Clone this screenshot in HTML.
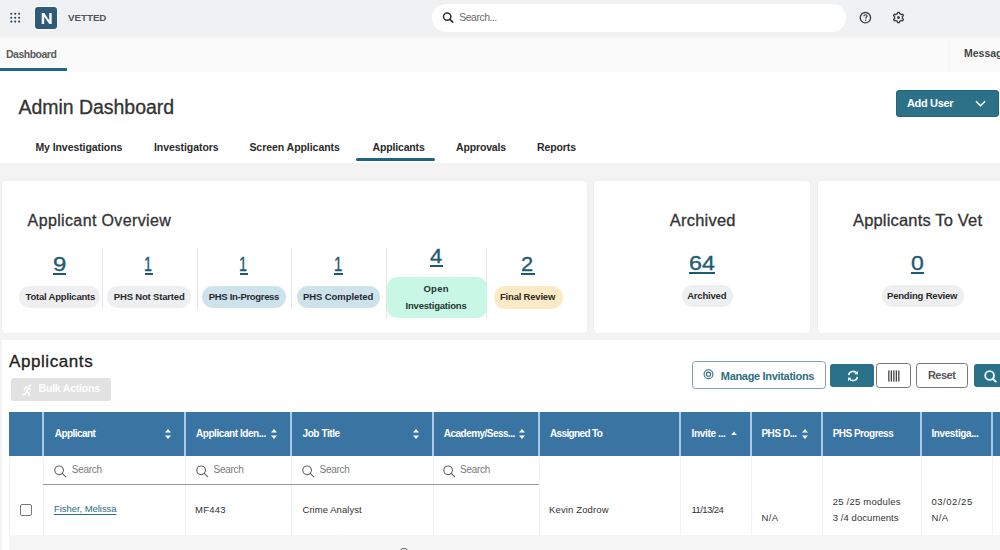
<!DOCTYPE html>
<html><head><meta charset="utf-8">
<style>
*{box-sizing:border-box;margin:0;padding:0}
html,body{width:1000px;height:550px;overflow:hidden;background:#fff;font-family:"Liberation Sans",sans-serif;color:#333}
.a{position:absolute}
.t{position:absolute;white-space:nowrap;line-height:normal}
.card{position:absolute;background:#fff;border-radius:4px;box-shadow:0 0 1.5px rgba(0,0,0,0.07)}
.pill{position:absolute;height:22px;border-radius:11px;background:#eeeff1}
.dv{position:absolute;width:1px;background:#e6e6e6}
.sep{position:absolute;top:411.5px;width:2px;height:44.7px;background:#a9c9e4}
.vl{position:absolute;top:456px;width:1px;height:79px;background:#f3f3f3}
.ul{position:absolute;height:2.1px;background:#1d5a73}
</style></head><body>
<div class="a" style="left:0;top:36px;width:1000px;height:36px;background:#fafafa"></div>
<div class="a" style="left:0;top:0;width:1000px;height:36px;background:#f0f1f3;box-shadow:0 1px 3px rgba(0,0,0,0.05)"></div>

<svg class="a" style="left:9px;top:12px" width="12" height="12" viewBox="0 0 12 12">
<g fill="#24444f"><circle cx="2.3" cy="1.8" r="1.05"/><circle cx="6.2" cy="1.8" r="1.05"/><circle cx="10.1" cy="1.8" r="1.05"/>
<circle cx="2.3" cy="5.7" r="1.05"/><circle cx="6.2" cy="5.7" r="1.05"/><circle cx="10.1" cy="5.7" r="1.05"/>
<circle cx="2.3" cy="9.6" r="1.05"/><circle cx="6.2" cy="9.6" r="1.05"/><circle cx="10.1" cy="9.6" r="1.05"/></g></svg>
<div class="a" style="left:34.5px;top:6.7px;width:22.5px;height:22.3px;background:#2f5b78;border-radius:3px;box-shadow:0 0 0 1px #fafbfc"></div>
<svg class="a" style="left:34.5px;top:6.7px" width="23" height="23" viewBox="0 0 23 23"><path d="M6.7 17.1V6h2.5l5 7.2V6h2.5v11.1h-2.4l-5.1-7.3v7.3z" fill="#f4f8fa"/></svg>

<div class="a" style="left:432px;top:4px;width:414px;height:28px;border-radius:14px;background:#fff"></div>
<svg class="a" style="left:441px;top:10px" width="15" height="15" viewBox="0 0 15 15"><circle cx="6.2" cy="6.6" r="3.7" fill="none" stroke="#333" stroke-width="1.5"/><path d="M8.9 9.3L11.7 12.1" stroke="#333" stroke-width="1.7" stroke-linecap="round"/></svg>

<svg class="a" style="left:858px;top:11px" width="15" height="14" viewBox="0 0 15 14"><circle cx="7.4" cy="6.7" r="5.2" fill="none" stroke="#3f3f3f" stroke-width="1.35"/><path d="M5.8 5.3c0-1 .7-1.6 1.7-1.6s1.6.6 1.6 1.4c0 1.1-1.5 1.2-1.5 2.3" fill="none" stroke="#3f3f3f" stroke-width="1.15"/><circle cx="7.6" cy="9.3" r="0.75" fill="#3f3f3f"/></svg>
<svg class="a" style="left:891px;top:10.15px" width="15" height="15" viewBox="0 0 15 15"><path fill="none" stroke="#3f3f3f" stroke-width="1.3" stroke-linejoin="round" d="M5.53 4.08 L6.41 3.70 L6.58 2.28 L8.42 2.28 L8.59 3.70 L9.48 4.08 L10.24 4.66 L11.56 4.09 L12.48 5.69 L11.33 6.54 L11.45 7.50 L11.33 8.46 L12.48 9.31 L11.56 10.91 L10.24 10.34 L9.48 10.92 L8.59 11.30 L8.42 12.72 L6.58 12.72 L6.41 11.30 L5.53 10.92 L4.76 10.34 L3.44 10.91 L2.52 9.31 L3.67 8.46 L3.55 7.50 L3.67 6.54 L2.52 5.69 L3.44 4.09 L4.76 4.66Z"/><circle cx="7.5" cy="7.5" r="1.5" fill="#3f3f3f"/></svg>

<div class="a" style="left:0;top:68px;width:67px;height:3px;background:#1f6480"></div>
<div class="a" style="left:948px;top:36px;width:2px;height:36px;background:#f5f5f5"></div>

<div class="a" style="left:896px;top:90px;width:103px;height:27px;border-radius:3px;background:#2d7189;border:1px solid #266379"></div>
<svg class="a" style="left:974px;top:98px" width="13" height="11" viewBox="0 0 13 11"><path d="M2 3.2L6.5 7.7L11 3.2" fill="none" stroke="#fff" stroke-width="1.6"/></svg>

<div class="a" style="left:356px;top:158px;width:79px;height:3px;background:#1f6480;border-radius:1.5px"></div>

<div class="a" style="left:0;top:163px;width:1000px;height:387px;background:#f3f3f3"></div>
<div class="card" style="left:2px;top:181px;width:585px;height:152px"></div>
<div class="card" style="left:594px;top:181px;width:216px;height:152px"></div>
<div class="card" style="left:818px;top:181px;width:215px;height:152px"></div>

<div class="dv" style="left:102px;top:248px;height:60px"></div>
<div class="dv" style="left:196.5px;top:248px;height:60px"></div>
<div class="dv" style="left:291px;top:248px;height:60px"></div>
<div class="dv" style="left:386px;top:248px;height:70px"></div>
<div class="dv" style="left:486px;top:248px;height:70px"></div>

<div class="pill" style="left:19px;top:286px;width:81px"></div>
<div class="pill" style="left:107px;top:286px;width:84px"></div>
<div class="pill" style="left:202px;top:286px;width:84px;background:#cde2eb"></div>
<div class="pill" style="left:297px;top:286px;width:83px;background:#cde2eb"></div>
<div class="pill" style="left:386.5px;top:277px;width:100.5px;height:40.5px;border-radius:10px;background:#c9f7e6"></div>
<div class="pill" style="left:493.5px;top:285.6px;width:69px;height:23px;background:#fbeac5"></div>
<div class="pill" style="left:682px;top:285px;width:51px"></div>
<div class="pill" style="left:881.5px;top:284.7px;width:82px"></div>

<div class="ul" style="left:53px;top:272.5px;width:13px"></div>
<div class="ul" style="left:144.5px;top:272.6px;width:8.5px"></div>
<div class="ul" style="left:239.5px;top:272.6px;width:8.5px"></div>
<div class="ul" style="left:334.3px;top:272.6px;width:8.5px"></div>
<div class="ul" style="left:429.5px;top:264.5px;width:13.2px"></div>
<div class="ul" style="left:521.3px;top:272.9px;width:13.4px"></div>
<div class="ul" style="left:689.2px;top:272px;width:26.1px"></div>
<div class="ul" style="left:910.6px;top:272px;width:13.4px"></div>

<div class="a" style="left:2px;top:340px;width:998px;height:210px;background:#fff"></div>
<div class="a" style="left:10.8px;top:378.2px;width:100px;height:22.6px;border-radius:3px;background:#e2e2e2"></div>
<svg class="a" style="left:21px;top:384px" width="12" height="12" viewBox="0 0 12 12"><g fill="none" stroke="#fff" stroke-width="1.5" stroke-linecap="round" stroke-linejoin="round"><path d="M5 3.2L7.8 3.6L9.2 5.6"/><path d="M7.6 3.6L5.6 7.6L8 9.2L8.3 11.3"/><path d="M5.6 7.6L3.6 10.6L1.4 10.6"/><path d="M5 3.2L3.2 5.6"/></g><circle cx="8.8" cy="1.6" r="1.2" fill="#fff"/></svg>

<div class="a" style="left:691.5px;top:361.4px;width:134.5px;height:28px;border:1.3px solid #7aa3ad;border-radius:3.5px;background:#fff"></div>
<svg class="a" style="left:703px;top:369px" width="11" height="11" viewBox="0 0 11 11"><circle cx="5.5" cy="5.2" r="4.4" fill="none" stroke="#2e6e80" stroke-width="1.1"/><circle cx="5.5" cy="5.2" r="2.1" fill="none" stroke="#2e6e80" stroke-width="1.1"/></svg>
<div class="a" style="left:830.3px;top:363.6px;width:43.7px;height:23.4px;border-radius:3px;background:#2b7189"></div>
<svg class="a" style="left:845.5px;top:368.5px" width="14" height="14" viewBox="0 0 14 14"><g fill="none" stroke="#e6f4f8" stroke-width="1.7"><path d="M2.6 6.2A4.5 4.5 0 0 1 10.8 4.4"/><path d="M11.4 7.8A4.5 4.5 0 0 1 3.2 9.6"/></g><path d="M12 1.8L12 5.6L8.4 5.2Z" fill="#e6f4f8"/><path d="M2 12.2L2 8.4L5.6 8.8Z" fill="#e6f4f8"/></svg>
<div class="a" style="left:876.2px;top:363.2px;width:34.4px;height:24.4px;border:1.3px solid #777;border-radius:3.5px;background:#fff"></div>
<svg class="a" style="left:887px;top:370px" width="13" height="12" viewBox="0 0 13 12"><g fill="#444"><rect x="1.2" y="0.4" width="1.3" height="11.2"/><rect x="3.7" y="0.4" width="1.3" height="11.2"/><rect x="6.2" y="0.4" width="1.3" height="11.2"/><rect x="8.7" y="0.4" width="1.3" height="11.2"/><rect x="11.2" y="0.4" width="1.3" height="11.2"/></g></svg>
<div class="a" style="left:916.3px;top:363.2px;width:51.3px;height:24.5px;border:1.3px solid #777;border-radius:3.5px;background:#fff"></div>
<div class="a" style="left:973.7px;top:363.9px;width:40px;height:23.6px;border-radius:3px;background:#2b7189"></div>
<svg class="a" style="left:983px;top:369px" width="15" height="15" viewBox="0 0 15 15"><circle cx="6.6" cy="6.5" r="4.4" fill="none" stroke="#e6f6fa" stroke-width="1.9"/><path d="M9.8 9.7L12.8 12.6" stroke="#e6f6fa" stroke-width="2" stroke-linecap="round"/></svg>

<div class="a" style="left:9px;top:411.5px;width:991px;height:44.7px;background:#3a74a3"></div>
<div class="sep" style="left:42px"></div>
<div class="sep" style="left:183.6px"></div>
<div class="sep" style="left:290px"></div>
<div class="sep" style="left:431.6px"></div>
<div class="sep" style="left:538px"></div>
<div class="sep" style="left:679px"></div>
<div class="sep" style="left:750px"></div>
<div class="sep" style="left:820.5px"></div>
<div class="sep" style="left:920px"></div>
<div class="sep" style="left:991px"></div>

<svg class="a" style="left:164px;top:428px" width="8" height="12" viewBox="0 0 8 12"><path d="M4 1L7 4.6H1z M4 11L7 7.4H1z" fill="#fff"/></svg>
<svg class="a" style="left:270px;top:428px" width="8" height="12" viewBox="0 0 8 12"><path d="M4 1L7 4.6H1z M4 11L7 7.4H1z" fill="#fff"/></svg>
<svg class="a" style="left:412px;top:428px" width="8" height="12" viewBox="0 0 8 12"><path d="M4 1L7 4.6H1z M4 11L7 7.4H1z" fill="#fff"/></svg>
<svg class="a" style="left:518px;top:428px" width="8" height="12" viewBox="0 0 8 12"><path d="M4 1L7 4.6H1z M4 11L7 7.4H1z" fill="#fff"/></svg>
<svg class="a" style="left:730px;top:428px" width="8" height="12" viewBox="0 0 8 12"><path d="M4 3.6L6.8 7H1.2z" fill="#fff"/></svg>
<svg class="a" style="left:801px;top:428px" width="8" height="12" viewBox="0 0 8 12"><path d="M4 1L7 4.6H1z M4 11L7 7.4H1z" fill="#fff"/></svg>

<div class="vl" style="left:43px"></div>
<div class="vl" style="left:184.5px"></div>
<div class="vl" style="left:291px"></div>
<div class="vl" style="left:432.5px"></div>
<div class="vl" style="left:539px"></div>
<div class="vl" style="left:680px"></div>
<div class="vl" style="left:751px"></div>
<div class="vl" style="left:821.5px"></div>
<div class="vl" style="left:921px"></div>
<div class="vl" style="left:992px"></div>
<div class="a" style="left:8.5px;top:456px;width:1px;height:94px;background:#f0f0f0"></div>

<div class="a" style="left:43px;top:483.5px;width:496px;height:1.5px;background:#9a9a9a"></div>
<svg class="a" style="left:54px;top:464.5px" width="13" height="13" viewBox="0 0 13 13"><circle cx="5.1" cy="5.3" r="4.3" fill="none" stroke="#666" stroke-width="1.15"/><path d="M8.2 8.4L11.6 11.6" stroke="#666" stroke-width="1.3" stroke-linecap="round"/></svg>
<svg class="a" style="left:195.5px;top:464.5px" width="13" height="13" viewBox="0 0 13 13"><circle cx="5.1" cy="5.3" r="4.3" fill="none" stroke="#666" stroke-width="1.15"/><path d="M8.2 8.4L11.6 11.6" stroke="#666" stroke-width="1.3" stroke-linecap="round"/></svg>
<svg class="a" style="left:301.5px;top:464.5px" width="13" height="13" viewBox="0 0 13 13"><circle cx="5.1" cy="5.3" r="4.3" fill="none" stroke="#666" stroke-width="1.15"/><path d="M8.2 8.4L11.6 11.6" stroke="#666" stroke-width="1.3" stroke-linecap="round"/></svg>
<svg class="a" style="left:443px;top:464.5px" width="13" height="13" viewBox="0 0 13 13"><circle cx="5.1" cy="5.3" r="4.3" fill="none" stroke="#666" stroke-width="1.15"/><path d="M8.2 8.4L11.6 11.6" stroke="#666" stroke-width="1.3" stroke-linecap="round"/></svg>

<div class="a" style="left:9px;top:535.4px;width:991px;height:15px;background:#f6f6f6"></div>
<div class="a" style="left:399px;top:548.2px;width:9.5px;height:9.5px;border-radius:50%;border:1.8px solid #555"></div>

<div class="a" style="left:20px;top:504.2px;width:11.5px;height:12px;border:1.3px solid #777;border-radius:2px;background:#fff"></div>
<div class="t" id="t0" style="left:68.00px;top:12.00px;font-size:9.8px;font-weight:700;color:#555;letter-spacing:-0.040px;">VETTED</div>
<div class="t" id="t1" style="left:459.21px;top:11.01px;font-size:10.5px;font-weight:400;color:#6a6a6a;letter-spacing:-0.500px;">Search...</div>
<div class="t" id="t2" style="left:6.00px;top:47.51px;font-size:10.5px;font-weight:700;color:#5c5c5c;letter-spacing:-0.500px;">Dashboard</div>
<div class="t" id="t3" style="left:964.00px;top:46.60px;font-size:10.5px;font-weight:700;color:#444;letter-spacing:0.000px;">Messages</div>
<div class="t" id="t4" style="left:18.41px;top:95.60px;font-size:19.5px;font-weight:400;color:#333;letter-spacing:-0.029px;-webkit-text-stroke:0.3px currentColor;">Admin Dashboard</div>
<div class="t" id="t5" style="left:907.00px;top:97.00px;font-size:11px;font-weight:700;color:#fff;letter-spacing:-0.343px;">Add User</div>
<div class="t" id="t6" style="left:35.41px;top:141.01px;font-size:10.5px;font-weight:700;color:#2a2a2a;letter-spacing:-0.075px;">My Investigations</div>
<div class="t" id="t7" style="left:154.00px;top:141.01px;font-size:10.5px;font-weight:700;color:#2a2a2a;letter-spacing:-0.058px;">Investigators</div>
<div class="t" id="t8" style="left:249.41px;top:141.01px;font-size:10.5px;font-weight:700;color:#2a2a2a;letter-spacing:-0.050px;">Screen Applicants</div>
<div class="t" id="t9" style="left:372.50px;top:141.01px;font-size:10.5px;font-weight:700;color:#2a2a2a;letter-spacing:-0.156px;">Applicants</div>
<div class="t" id="t10" style="left:456.00px;top:141.01px;font-size:10.5px;font-weight:700;color:#2a2a2a;letter-spacing:-0.150px;">Approvals</div>
<div class="t" id="t11" style="left:537.00px;top:141.01px;font-size:10.5px;font-weight:700;color:#2a2a2a;letter-spacing:-0.100px;">Reports</div>
<div class="t" id="t12" style="left:27.60px;top:211.60px;font-size:16px;font-weight:400;color:#333;letter-spacing:0.365px;-webkit-text-stroke:0.3px currentColor;">Applicant Overview</div>
<div class="t" id="t13" style="left:669.71px;top:210.70px;font-size:16.5px;font-weight:400;color:#333;letter-spacing:0.229px;-webkit-text-stroke:0.3px currentColor;">Archived</div>
<div class="t" id="t14" style="left:853.00px;top:210.70px;font-size:16.5px;font-weight:400;color:#333;letter-spacing:0.169px;-webkit-text-stroke:0.3px currentColor;">Applicants To Vet</div>
<div class="t" id="t15" style="left:53.00px;top:251.82px;font-size:21px;font-weight:400;color:#1d5a73;transform:scaleX(1.1410);transform-origin:0 0;-webkit-text-stroke:0.35px #1d5a73;">9</div>
<div class="t" id="t16" style="left:144.31px;top:252.10px;font-size:21px;font-weight:400;color:#1d5a73;transform:scaleX(0.6820);transform-origin:0 0;-webkit-text-stroke:0.35px #1d5a73;">1</div>
<div class="t" id="t17" style="left:239.31px;top:252.10px;font-size:21px;font-weight:400;color:#1d5a73;transform:scaleX(0.6820);transform-origin:0 0;-webkit-text-stroke:0.35px #1d5a73;">1</div>
<div class="t" id="t18" style="left:334.10px;top:252.10px;font-size:21px;font-weight:400;color:#1d5a73;transform:scaleX(0.7161);transform-origin:0 0;-webkit-text-stroke:0.35px #1d5a73;">1</div>
<div class="t" id="t19" style="left:430.10px;top:243.51px;font-size:21px;font-weight:400;color:#1d5a73;transform:scaleX(1.0474);transform-origin:0 0;-webkit-text-stroke:0.35px #1d5a73;">4</div>
<div class="t" id="t20" style="left:521.41px;top:252.10px;font-size:21px;font-weight:400;color:#1d5a73;transform:scaleX(1.0411);transform-origin:0 0;-webkit-text-stroke:0.35px #1d5a73;">2</div>
<div class="t" id="t21" style="left:689.21px;top:250.82px;font-size:21px;font-weight:400;color:#1d5a73;transform:scaleX(1.1093);transform-origin:0 0;-webkit-text-stroke:0.35px #1d5a73;">64</div>
<div class="t" id="t22" style="left:910.71px;top:250.82px;font-size:21px;font-weight:400;color:#1d5a73;transform:scaleX(1.0931);transform-origin:0 0;-webkit-text-stroke:0.35px #1d5a73;">0</div>
<div class="t" id="t23" style="left:25.50px;top:290.51px;font-size:9.5px;font-weight:700;color:#2a2a2a;letter-spacing:-0.200px;">Total Applicants</div>
<div class="t" id="t24" style="left:113.81px;top:290.51px;font-size:9.5px;font-weight:700;color:#2a2a2a;letter-spacing:-0.171px;">PHS Not Started</div>
<div class="t" id="t25" style="left:208.81px;top:290.51px;font-size:9.5px;font-weight:700;color:#1f2a30;letter-spacing:-0.314px;">PHS In-Progress</div>
<div class="t" id="t26" style="left:303.00px;top:290.51px;font-size:9.5px;font-weight:700;color:#1f2a30;letter-spacing:-0.083px;">PHS Completed</div>
<div class="t" id="t27" style="left:423.41px;top:283.01px;font-size:9.5px;font-weight:700;color:#1f3330;letter-spacing:0.267px;">Open</div>
<div class="t" id="t28" style="left:405.60px;top:300.01px;font-size:9.5px;font-weight:700;color:#1f3330;letter-spacing:-0.215px;">Investigations</div>
<div class="t" id="t29" style="left:500.00px;top:291.41px;font-size:9.5px;font-weight:700;color:#2d2a20;letter-spacing:-0.200px;">Final Review</div>
<div class="t" id="t30" style="left:687.21px;top:289.80px;font-size:9.5px;font-weight:700;color:#2a2a2a;letter-spacing:-0.200px;">Archived</div>
<div class="t" id="t31" style="left:887.00px;top:289.80px;font-size:9.5px;font-weight:700;color:#2a2a2a;letter-spacing:-0.185px;">Pending Review</div>
<div class="t" id="t32" style="left:9.00px;top:351.81px;font-size:17px;font-weight:400;color:#222;letter-spacing:0.578px;-webkit-text-stroke:0.3px currentColor;">Applicants</div>
<div class="t" id="t33" style="left:38.60px;top:382.41px;font-size:10.5px;font-weight:700;color:#fff;letter-spacing:-0.218px;">Bulk Actions</div>
<div class="t" id="t34" style="left:720.81px;top:369.81px;font-size:11px;font-weight:700;color:#2e6e80;letter-spacing:-0.318px;">Manage Invitations</div>
<div class="t" id="t35" style="left:927.91px;top:368.81px;font-size:11px;font-weight:700;color:#555;letter-spacing:-0.500px;">Reset</div>
<div class="t" id="t36" style="left:54.81px;top:427.81px;font-size:10px;font-weight:700;color:#fff;letter-spacing:-0.575px;">Applicant</div>
<div class="t" id="t37" style="left:196.00px;top:427.81px;font-size:10px;font-weight:700;color:#fff;letter-spacing:-0.438px;">Applicant Iden...</div>
<div class="t" id="t38" style="left:302.50px;top:427.81px;font-size:10px;font-weight:700;color:#fff;letter-spacing:-0.413px;">Job Title</div>
<div class="t" id="t39" style="left:443.81px;top:427.81px;font-size:10px;font-weight:700;color:#fff;letter-spacing:-0.529px;">Academy/Sess...</div>
<div class="t" id="t40" style="left:550.00px;top:427.81px;font-size:10px;font-weight:700;color:#fff;letter-spacing:-0.630px;">Assigned To</div>
<div class="t" id="t41" style="left:691.50px;top:427.81px;font-size:10px;font-weight:700;color:#fff;letter-spacing:-0.333px;">Invite ...</div>
<div class="t" id="t42" style="left:761.41px;top:427.81px;font-size:10px;font-weight:700;color:#fff;letter-spacing:-0.457px;">PHS D...</div>
<div class="t" id="t43" style="left:832.71px;top:427.81px;font-size:10px;font-weight:700;color:#fff;letter-spacing:-0.518px;">PHS Progress</div>
<div class="t" id="t44" style="left:931.41px;top:427.81px;font-size:10px;font-weight:700;color:#fff;letter-spacing:-0.400px;">Investiga...</div>
<div class="t" id="t45" style="left:71.81px;top:464.00px;font-size:10px;font-weight:400;color:#7a7a7a;letter-spacing:-0.280px;">Search</div>
<div class="t" id="t46" style="left:213.50px;top:464.00px;font-size:10px;font-weight:400;color:#7a7a7a;letter-spacing:-0.280px;">Search</div>
<div class="t" id="t47" style="left:319.50px;top:464.00px;font-size:10px;font-weight:400;color:#7a7a7a;letter-spacing:-0.280px;">Search</div>
<div class="t" id="t48" style="left:460.00px;top:464.00px;font-size:10px;font-weight:400;color:#7a7a7a;letter-spacing:-0.280px;">Search</div>
<div class="t" id="t49" style="left:54.00px;top:503.41px;font-size:9.5px;font-weight:400;color:#2b6b82;letter-spacing:-0.057px;text-decoration:underline;text-underline-offset:1.5px;">Fisher, Melissa</div>
<div class="t" id="t50" style="left:195.00px;top:504.22px;font-size:9.5px;font-weight:400;color:#333;letter-spacing:0.250px;">MF443</div>
<div class="t" id="t51" style="left:302.50px;top:504.22px;font-size:9.5px;font-weight:400;color:#333;letter-spacing:0.042px;">Crime Analyst</div>
<div class="t" id="t52" style="left:549.00px;top:504.01px;font-size:9.5px;font-weight:400;color:#333;letter-spacing:0.136px;">Kevin Zodrow</div>
<div class="t" id="t53" style="left:691.60px;top:504.22px;font-size:9.5px;font-weight:400;color:#333;letter-spacing:-0.600px;">11/13/24</div>
<div class="t" id="t54" style="left:761.41px;top:512.22px;font-size:9.5px;font-weight:400;color:#333;letter-spacing:0.400px;">N/A</div>
<div class="t" id="t55" style="left:832.71px;top:495.72px;font-size:9.5px;font-weight:400;color:#333;letter-spacing:0.223px;">25 /25 modules</div>
<div class="t" id="t56" style="left:832.71px;top:512.22px;font-size:9.5px;font-weight:400;color:#333;letter-spacing:0.069px;">3 /4 documents</div>
<div class="t" id="t57" style="left:931.41px;top:495.72px;font-size:9.5px;font-weight:400;color:#333;letter-spacing:0.543px;">03/02/25</div>
<div class="t" id="t58" style="left:931.41px;top:512.22px;font-size:9.5px;font-weight:400;color:#333;letter-spacing:0.400px;">N/A</div>
</body></html>
